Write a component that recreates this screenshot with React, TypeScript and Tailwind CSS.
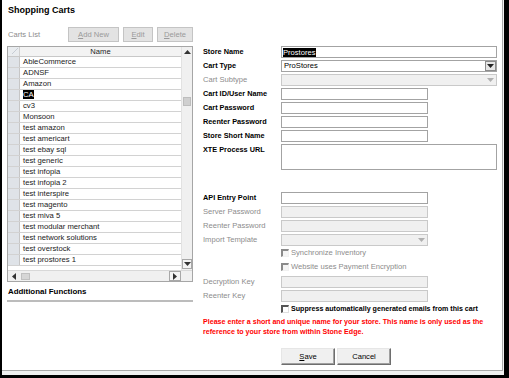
import React from "react";

const rows = [
  "AbleCommerce",
  "ADNSF",
  "Amazon",
  "CA",
  "cv3",
  "Monsoon",
  "test amazon",
  "test americart",
  "test ebay sql",
  "test generic",
  "test infopia",
  "test infopia 2",
  "test interspire",
  "test magento",
  "test miva 5",
  "test modular merchant",
  "test network solutions",
  "test overstock",
  "test prostores 1",
];

function Tri({ dir, color = "#333" }: { dir: "up" | "down" | "left" | "right"; color?: string }) {
  const pts =
    dir === "up"
      ? "0,4 3.5,0 7,4"
      : dir === "down"
      ? "0,0 7,0 3.5,4"
      : dir === "left"
      ? "4,0 4,7 0,3.5"
      : "0,0 0,7 4,3.5";
  const w = dir === "up" || dir === "down" ? 7 : 4;
  const h = dir === "up" || dir === "down" ? 4 : 7;
  return (
    <svg width={w} height={h} viewBox={`0 0 ${w} ${h}`}>
      <polygon points={pts} fill={color} />
    </svg>
  );
}

function Label({ text, bold = true }: { text: string; bold?: boolean }) {
  return (
    <div
      className={`w-[78px] shrink-0 whitespace-nowrap leading-[12px] ${
        bold ? "text-[7.3px] font-bold text-black" : "text-[7.6px] text-[#8c8c8c]"
      }`}
    >
      {text}
    </div>
  );
}

function Input({ wide = true, disabled = false, children }: { wide?: boolean; disabled?: boolean; children?: React.ReactNode }) {
  return (
    <div
      className={`h-[12px] ${wide ? "w-[216px]" : "w-[147px]"} border flex items-center ${
        disabled ? "bg-[#f0f0f0] border-[#c9c9c9]" : "bg-white border-[#a3a3a3]"
      }`}
    >
      {children}
    </div>
  );
}

function Select({ wide = true, disabled = false, value }: { wide?: boolean; disabled?: boolean; value?: string }) {
  return (
    <div
      className={`h-[12px] ${wide ? "w-[216px]" : "w-[147px]"} border flex items-center justify-between ${
        disabled ? "bg-[#f0f0f0] border-[#c9c9c9]" : "bg-white border-[#a3a3a3]"
      }`}
    >
      <span className="pl-[2px] text-[7.6px] leading-[10px] text-black">{value}</span>
      <div
        className={`h-[10px] w-[11px] flex items-center justify-center ${
          disabled ? "" : "bg-[#e6e6e6] border border-[#8c8c8c]"
        }`}
      >
        <Tri dir="down" color={disabled ? "#b0b0b0" : "#222"} />
      </div>
    </div>
  );
}

function Row({ label, bold = true, children, className = "" }: { label: string; bold?: boolean; children: React.ReactNode; className?: string }) {
  return (
    <div className={`flex items-center h-[12px] ${className}`}>
      <Label text={label} bold={bold} />
      {children}
    </div>
  );
}

function Check({ disabled }: { disabled?: boolean }) {
  return (
    <div
      className={`w-[8px] h-[8px] shrink-0 border-t-2 border-l-2 border-b border-r ${
        disabled
          ? "border-t-[#8a8a8a] border-l-[#8a8a8a] border-b-[#f0f0f0] border-r-[#f0f0f0] bg-[#f4f4f4]"
          : "border-t-[#555] border-l-[#555] border-b-[#e0e0e0] border-r-[#e0e0e0] bg-white"
      }`}
    />
  );
}

function ToolBtn({ first, rest, w }: { first: string; rest: string; w: string }) {
  return (
    <div
      className={`${w} h-[15px] bg-[#e3e3e3] border border-[#c4c4c4] flex items-center justify-center text-[7.6px] text-[#9a9a9a]`}
    >
      <span className="underline">{first}</span>
      {rest}
    </div>
  );
}

function Btn({ children }: { children: React.ReactNode }) {
  return (
    <div className="w-[54px] h-[17px] bg-[#f0f0f0] border border-t-[#e6e6e6] border-l-[#e6e6e6] border-b-[#6e6e6e] border-r-[#6e6e6e] flex items-center justify-center text-[7.6px] text-black shadow-[inset_-1px_-1px_0_#a0a0a0]">
      {children}
    </div>
  );
}

export default function App() {
  return (
    <div
      className="w-[509px] h-[378px] bg-black pl-[2px] pr-[5px] pb-[3px] flex"
      style={{ fontFamily: '"Liberation Sans", Arial, sans-serif' }}
    >
      <div className="flex-1 flex flex-col bg-[#f0f0f0]">
        <div className="h-[371px] w-[501px] bg-white border-r border-b border-[#a9a9a9] flex pl-[5px]">
          {/* Left column */}
          <div className="w-[186px] flex flex-col">
            <div className="mt-[4px] h-[12px] leading-[12px] pl-[1px] text-[9px] font-bold text-black">Shopping Carts</div>
            <div className="mt-[11px] h-[15px] flex items-center justify-between">
              <span className="pl-[1px] text-[7.6px] text-[#8c8c8c]">Carts List</span>
              <div className="flex gap-[4px]">
                <ToolBtn first="A" rest="dd New" w="w-[51px]" />
                <ToolBtn first="E" rest="dit" w="w-[30px]" />
                <ToolBtn first="D" rest="elete" w="w-[36px]" />
              </div>
            </div>
            {/* Grid */}
            <div className="mt-[4px] h-[236px] border border-[#a6a6a6] flex flex-col">
              <div className="h-[223px] flex overflow-hidden">
                <div className="w-[173px] flex flex-col overflow-hidden">
                  <div className="h-[10px] shrink-0 flex border-b border-[#c8c8c8] bg-[#f3f3f3]">
                    <div className="w-[12px] border-r border-[#d0d0d0] bg-[#e9ecef] relative">
                      <svg width="6" height="6" className="absolute left-[4px] top-[1px]">
                        <line x1="0" y1="6" x2="6" y2="0" stroke="#c6ccd4" strokeWidth="1" />
                      </svg>
                    </div>
                    <div className="flex-1 text-center text-[7.6px] leading-[9px] text-[#222]">Name</div>
                  </div>
                  {rows.map((r) => (
                    <div key={r} className="h-[11px] shrink-0 flex border-b border-[#d2d2d2]">
                      <div className="w-[12px] border-r border-[#c6c6c6] bg-[#dfe3e8]" />
                      <div className="flex-1 pl-[3px] text-[7.7px] leading-[10px] text-[#1a1a1a] whitespace-nowrap">
                        {r === "CA" ? <span className="bg-black text-white">CA</span> : r}
                      </div>
                    </div>
                  ))}
                </div>
                <div className="w-[11px] bg-[#f0f0f0] border-l border-[#e2e2e2] flex flex-col items-center">
                  <div className="h-[10px] flex items-center justify-center">
                    <Tri dir="up" color="#333" />
                  </div>
                  <div className="mt-[40px] w-[8px] h-[9px] bg-[#cfcfcf] border border-[#bdbdbd]" />
                  <div className="flex-1" />
                  <div className="mb-[1px] w-[10px] h-[10px] bg-[#f3f3f3] border border-[#a8a8a8] flex items-center justify-center">
                    <Tri dir="down" color="#333" />
                  </div>
                </div>
              </div>
              <div className="h-[11px] flex border-t border-[#d8d8d8]">
                <div className="w-[173px] bg-[#f0f0f0] flex items-center">
                  <div className="w-[11px] flex items-center justify-center">
                    <Tri dir="left" color="#333" />
                  </div>
                  <div className="ml-[2px] w-[9px] h-[7px] bg-[#d6d6d6] border border-[#c0c0c0]" />
                  <div className="flex-1" />
                  <div className="w-[12px] h-[10px] bg-[#f6f6f6] border border-[#a8a8a8] flex items-center justify-center">
                    <Tri dir="right" color="#333" />
                  </div>
                </div>
                <div className="flex-1 bg-[#f0f0f0]" />
              </div>
            </div>
            <div className="mt-[5px] h-[10px] leading-[10px] pl-[1px] text-[7.9px] font-bold text-black">Additional Functions</div>
            <div className="mt-[3px] h-[2px] bg-[#bcbcbc]" />
          </div>

          {/* Right column */}
          <div className="ml-[10px] w-[295px] flex flex-col pt-[46px]">
            <Row label="Store Name">
              <Input>
                <span className="ml-[1px] bg-black text-white text-[7.6px] leading-[9px]">Prostores</span>
              </Input>
            </Row>
            <Row label="Cart Type" className="mt-[2px]">
              <Select value="ProStores" />
            </Row>
            <Row label="Cart Subtype" bold={false} className="mt-[2px]">
              <Select disabled />
            </Row>
            <Row label="Cart ID/User Name" className="mt-[2px]">
              <Input wide={false} />
            </Row>
            <Row label="Cart Password" className="mt-[2px]">
              <Input wide={false} />
            </Row>
            <Row label="Reenter Password" className="mt-[2px]">
              <Input wide={false} />
            </Row>
            <Row label="Store Short Name" className="mt-[2px]">
              <Input wide={false} />
            </Row>
            <div className="mt-[2px] flex items-start">
              <Label text="XTE Process URL" />
              <div className="w-[216px] h-[26px] border border-[#a3a3a3] bg-white" />
            </div>
            <Row label="API Entry Point" className="mt-[22px]">
              <Input wide={false} />
            </Row>
            <Row label="Server Password" bold={false} className="mt-[2px]">
              <Input wide={false} disabled />
            </Row>
            <Row label="Reenter Password" bold={false} className="mt-[2px]">
              <Input wide={false} disabled />
            </Row>
            <Row label="Import Template" bold={false} className="mt-[2px]">
              <Select wide={false} disabled />
            </Row>
            <div className="mt-[1px] h-[12px] flex items-center pl-[78px] gap-[2px]">
              <Check disabled />
              <span className="text-[7.6px] text-[#8c8c8c] whitespace-nowrap">Synchronize Inventory</span>
            </div>
            <div className="mt-[2px] h-[12px] flex items-center pl-[78px] gap-[2px]">
              <Check disabled />
              <span className="text-[7.6px] text-[#8c8c8c] whitespace-nowrap">Website uses Payment Encryption</span>
            </div>
            <Row label="Decryption Key" bold={false} className="mt-[3px]">
              <Input wide={false} disabled />
            </Row>
            <Row label="Reenter Key" bold={false} className="mt-[2px]">
              <Input wide={false} disabled />
            </Row>
            <div className="mt-[1px] h-[12px] flex items-center pl-[78px] gap-[2px]">
              <Check />
              <span className="text-[7.1px] font-bold text-black whitespace-nowrap">
                Suppress automatically generated emails from this cart
              </span>
            </div>
            <div className="mt-[2px] text-[7.1px] leading-[10px] font-bold text-[#ff0000] whitespace-nowrap">
              Please enter a short and unique name for your store. This name is only used as the
              <br />
              reference to your store from within Stone Edge.
            </div>
            <div className="mt-[11px] pl-[78px] flex gap-[2px]">
              <Btn>
                <span className="underline">S</span>ave
              </Btn>
              <Btn>Cancel</Btn>
            </div>
          </div>
        </div>
      </div>
    </div>
  );
}
